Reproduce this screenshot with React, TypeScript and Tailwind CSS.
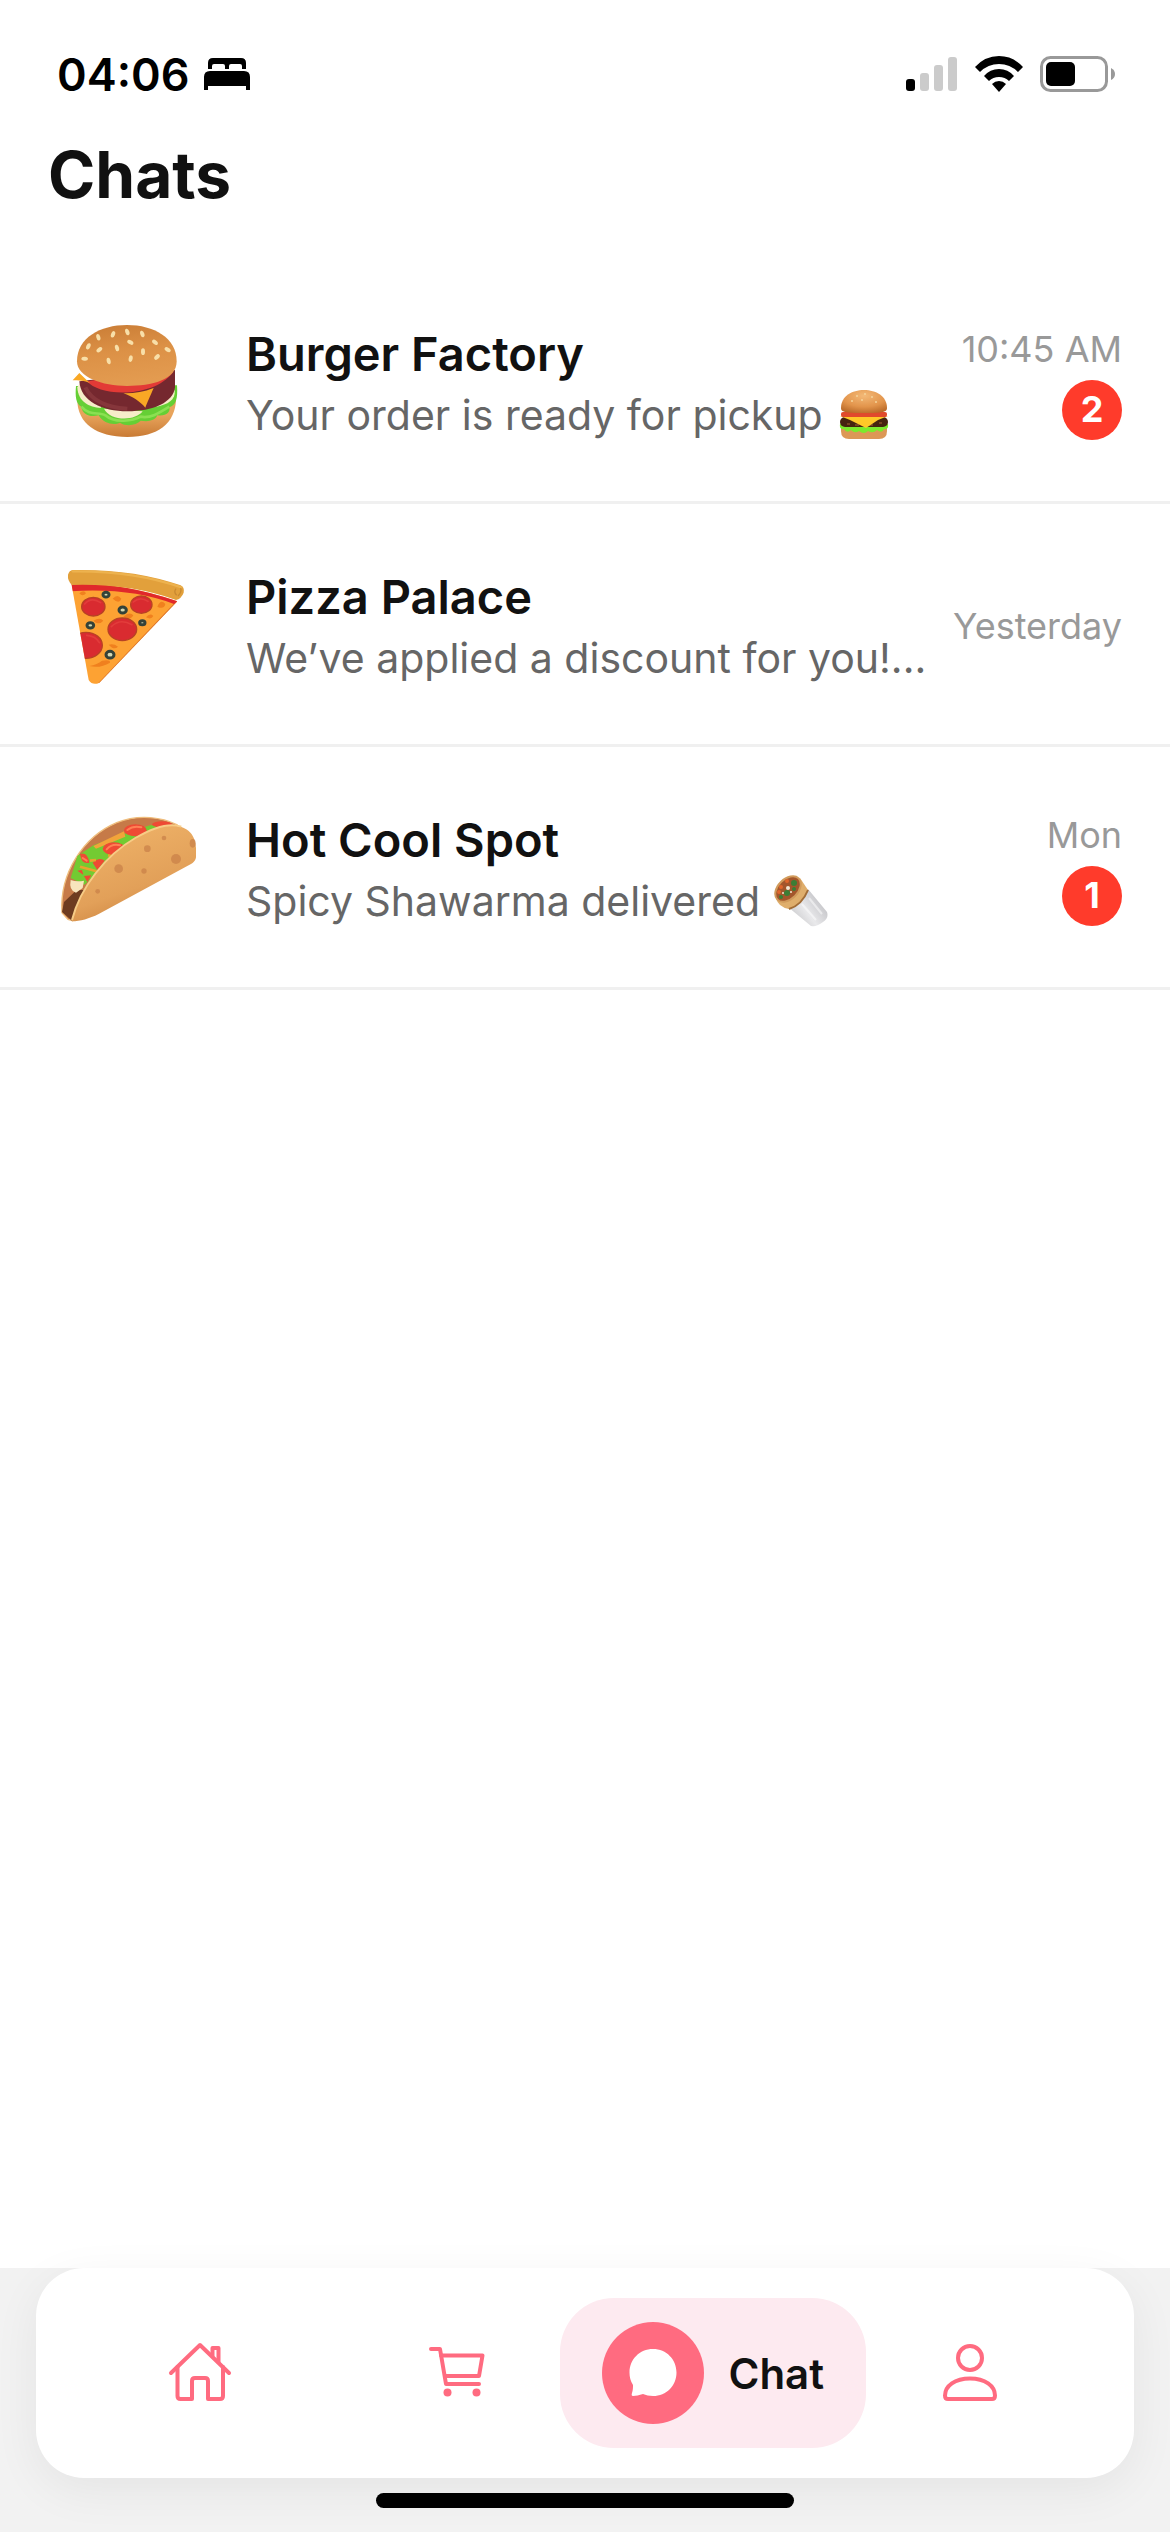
import type { ReactNode } from "react";

function Seeds() {
  const seeds = [
    [262, 96, 20], [219, 103, -20], [175, 112, 15], [307, 102, 20], [145, 139, -25], [178, 149, -50],
    [231, 144, 15], [271, 127, 60], [309, 155, 0], [345, 127, 50], [383, 149, 60], [134, 176, 85],
    [206, 183, 10], [272, 176, -10], [351, 171, -45],
  ];
  return (
    <g fill="#f8dfa8">
      {seeds.map(([x, y, r]) => (
        <ellipse key={`${x}-${y}`} cx={x} cy={y} rx="6" ry="10" transform={`rotate(${-r} ${x} ${y})`} />
      ))}
    </g>
  );
}

function BurgerPicture() {
  return (
    <svg viewBox="24 0 486 486" className="size-full" aria-hidden="true">
      <defs>
        <linearGradient id="bun" x1="0" y1="0" x2="0.2" y2="1">
          <stop offset="0" stopColor="#c97c35" />
          <stop offset="0.5" stopColor="#dc9146" />
          <stop offset="1" stopColor="#e39b50" />
        </linearGradient>
        <linearGradient id="bunBase" x1="0" y1="0" x2="0" y2="1">
          <stop offset="0.4" stopColor="#e8a45c" />
          <stop offset="1" stopColor="#c97b35" />
        </linearGradient>
      </defs>
      <path d="M112 300C112 370 170 411 262 411S405 370 408 300Z" fill="url(#bunBase)" />
      <path d="M108 258C105 290 108 312 124 320C128 345 150 352 176 346C192 374 225 376 240 368C262 382 290 374 302 362C325 366 345 362 352 346C378 350 392 336 388 322C408 316 414 296 411 256Z" fill="#65cf35" />
      <path d="M124 320C150 350 176 334 196 346C225 372 280 362 302 350C330 356 356 340 388 320" fill="none" stroke="#8be052" strokeWidth="8" />
      <path d="M112 262C114 306 148 322 182 324L190 300L120 250Z" fill="#f7edc9" />
      <path d="M404 270C408 300 382 314 350 320L342 300Z" fill="#f7edc9" />
      <path d="M192 326C210 364 286 364 308 334Z" fill="#f7edc9" />
      <path d="M118 244C122 304 186 334 262 334S400 308 405 262V210Z" fill="#75282f" />
      <path d="M136 262C156 304 200 322 262 326" fill="none" stroke="#86363b" strokeWidth="12" />
      <path d="M142 244C176 290 340 296 400 216L384 206Z" fill="#e33a36" />
      <path d="M98 241L118 219L150 250C132 240 116 243 98 241Z" fill="#f9a825" />
      <path d="M250 280C280 281 310 276 341 264C330 290 322 306 316 323C300 304 278 290 250 280Z" fill="#f9a825" />
      <path d="M111 184C111 114 180 75 261 75S410 114 410 184C410 240 335 258 261 258S111 232 111 184Z" fill="url(#bun)" />
      <Seeds />
    </svg>
  );
}

function PizzaPicture() {
  const olives = [
    [198, 164, 9], [248, 210, 11], [307, 248, 8], [151, 256, 10], [210, 344, 12],
  ];
  return (
    <svg viewBox="24 9 486 486" className="size-full" aria-hidden="true">
      <defs>
        <clipPath id="slice">
          <path d="M94 130L146 420Q158 438 178 428L412 184Q250 128 94 130Z" />
        </clipPath>
      </defs>
      <g clipPath="url(#slice)">
        <rect x="80" y="100" width="360" height="350" fill="#fda233" />
        <path d="M178 432L412 186" stroke="#d96e2b" strokeWidth="8" />
        <g fill="#f0801e">
          <path d="M218 176q14-16 26 0q-6 18-26 0ZM160 242q20-12 30 0q-14 16-30 0ZM250 230q18-16 30-4q-10 18-30 4ZM352 200q10-24 24-8q-4 18-24 8ZM206 314q16-4 28 6q-12 12-28-6ZM148 378q24-4 38-16q26-4 24 6q-30 18-62 10ZM118 160q14-12 20 0q-10 12-20 0ZM318 232q12-14 22-4q-6 12-22 4Z" />
        </g>
        <g fill="#d92b30" stroke="#b84224" strokeWidth="4">
          <ellipse cx="160" cy="200" rx="35" ry="28" />
          <ellipse cx="304" cy="194" rx="32" ry="26" />
          <ellipse cx="247" cy="268" rx="43" ry="34" />
          <ellipse cx="138" cy="316" rx="49" ry="39" />
        </g>
        <g fill="none" stroke="#e23c3b" strokeWidth="5" strokeLinecap="round">
          <path d="M134 192Q154 170 182 188M280 186Q300 168 324 184M214 260Q240 234 276 254M140 286Q168 288 178 308" />
        </g>
        <path d="M90 130Q270 130 416 180L402 192Q270 142 90 154Z" fill="#e0282b" />
      </g>
      {olives.map(([x, y, r]) => (
        <ellipse key={`${x}-${y}`} cx={x} cy={y} rx={r} ry={r - 2} fill="#d5d8b1" stroke="#344239" strokeWidth="9" />
      ))}
      <path d="M98 90Q280 86 422 136Q434 142 431 158Q424 176 408 180Q270 130 96 135Q82 122 84 104Q88 91 98 90Z" fill="#e2a03b" />
      <path d="M98 94Q280 92 424 142" fill="none" stroke="#edb24e" strokeWidth="7" strokeLinecap="round" />
      <path d="M408 146q-8 10 2 20M422 144q4 12-8 24" fill="none" stroke="#c98a31" strokeWidth="4" />
    </svg>
  );
}

function TacoPicture() {
  return (
    <svg viewBox="24 -12 486 486" className="size-full" aria-hidden="true">
      <defs>
        <linearGradient id="shell" x1="0.3" y1="0.1" x2="0.7" y2="1">
          <stop offset="0" stopColor="#edb066" />
          <stop offset="0.6" stopColor="#e2a059" />
          <stop offset="1" stopColor="#c9803c" />
        </linearGradient>
      </defs>
      <path d="M66 368C58 250 130 140 230 98C300 70 370 84 410 104L250 180L98 392L84 388Z" fill="#c67a48" stroke="#efbd7c" strokeWidth="4" />
      <path d="M66 366L72 336L110 300L136 300L96 392Z" fill="#6e3c20" />
      <path d="M92 264L112 198L160 166L250 132L330 106L390 104L240 180L134 284Z" fill="#73cb32" />
      <path d="M92 270Q110 276 132 272L128 294L108 308Q86 302 92 270Z" fill="#f8e5bd" />
      <path d="M160 168L252 124L256 140L168 176Z" fill="#f2a43a" />
      <g fill="#ee4a34">
        <ellipse cx="286" cy="121" rx="34" ry="18" />
        <ellipse cx="222" cy="176" rx="34" ry="19" />
        <ellipse cx="366" cy="103" rx="30" ry="9" />
        <path d="M120 192Q142 184 148 218Q124 224 120 192ZM158 218Q178 200 194 212L172 240ZM132 258L154 256L142 276ZM112 242L126 240L130 254Z" />
      </g>
      <g fill="none" stroke="#ff8054" strokeWidth="6" strokeLinecap="round">
        <path d="M262 120Q280 106 304 112M200 178Q216 160 240 166M128 204L140 212" />
      </g>
      <path d="M120 230L170 244M204 196L224 202M150 212L168 210" stroke="#e7a52c" strokeWidth="8" />
      <path d="M96 394C120 294 196 196 286 144C370 92 464 90 468 174V202C466 214 458 220 446 226L176 372C148 386 120 394 96 394Z" fill="url(#shell)" />
      <path d="M96 390C120 294 196 196 286 144C340 112 390 98 424 110" fill="none" stroke="#f7cc86" strokeWidth="6" />
      <g fill="#c98048" opacity="0.7">
        <circle cx="236" cy="236" r="13" />
        <circle cx="322" cy="176" r="10" />
        <circle cx="408" cy="207" r="15" />
        <circle cx="312" cy="243" r="8" />
        <circle cx="372" cy="144" r="7" />
        <circle cx="173" cy="304" r="7" />
        <ellipse cx="458" cy="160" rx="9" ry="13" />
      </g>
    </svg>
  );
}

function BurgerEmoji() {
  return (
    <svg viewBox="0 0 54 54" className="ml-3.5 inline-block size-[54px] shrink-0 align-middle" role="img" aria-label="Burger">
      <defs>
        <radialGradient id="emojiBun" cx="0.5" cy="0.25" r="0.8">
          <stop offset="0" stopColor="#f3b977" />
          <stop offset="0.6" stopColor="#e2944b" />
          <stop offset="1" stopColor="#b86827" />
        </radialGradient>
      </defs>
      <path d="M4 39H50V43Q50 51 42 51H12Q4 51 4 43Z" fill="#dc9856" />
      <path d="M3 36Q2 42 7 41Q10 46 14 42Q18 46 22 43Q27 47 31 43Q36 46 40 42Q45 46 47 41Q52 42 51 36Z" fill="#7bea2c" />
      <rect x="3" y="29" width="48" height="10" rx="5" fill="#45240f" />
      <path d="M10 36h3M18 37h4M32 37h4M42 35h3" stroke="#754420" strokeWidth="2" />
      <path d="M3 28H51L41 32L29 40L13 32Z" fill="#ffc928" />
      <rect x="4" y="24" width="46" height="5" rx="2" fill="#e04a2c" />
      <path d="M4 20C4 8 15 2 27 2S50 8 50 20C50 24 46 25 27 25S4 24 4 20Z" fill="url(#emojiBun)" />
      <g fill="#f5d39a">
        <circle cx="20" cy="8" r="1" /><circle cx="28" cy="6" r="1" /><circle cx="35" cy="9" r="1" />
        <circle cx="15" cy="13" r="1" /><circle cx="25" cy="12" r="1" /><circle cx="39" cy="14" r="1" />
      </g>
    </svg>
  );
}

function WrapEmoji() {
  return (
    <svg viewBox="0 0 54 54" className="ml-3.5 inline-block size-[54px] shrink-0 align-middle" role="img" aria-label="Wrap">
      <defs>
        <linearGradient id="foil" x1="0" y1="1" x2="1" y2="0.3">
          <stop offset="0" stopColor="#b9b9bb" />
          <stop offset="0.5" stopColor="#e9e9eb" />
          <stop offset="1" stopColor="#bcbcc0" />
        </linearGradient>
      </defs>
      <path d="M14 33L34 15L53 38Q55 44 49 48Q43 53 37 52Z" fill="url(#foil)" />
      <path d="M2 24Q4 33 15 35Q26 32 34 16L26 4Z" fill="#dfae6c" />
      <path d="M15 35Q28 31 34 16" fill="none" stroke="#a26d37" strokeWidth="2" />
      <ellipse cx="14" cy="15" rx="10" ry="15" transform="rotate(45 14 15)" fill="#a3562c" stroke="#d19b5c" strokeWidth="2" />
      <g fill="#3c7d35">
        <circle cx="20" cy="9" r="3" /><circle cx="13" cy="19" r="3" /><circle cx="7" cy="23" r="2" /><circle cx="20" cy="15" r="2" />
      </g>
      <g fill="#f2e8d5">
        <circle cx="14" cy="14" r="2" /><circle cx="9" cy="19" r="1" /><circle cx="17" cy="18" r="1" />
      </g>
      <g fill="#e0662c">
        <circle cx="13" cy="7" r="2" /><circle cx="7" cy="13" r="2" /><circle cx="5" cy="18" r="2" />
      </g>
      <path d="M28 30L42 46M35 24L48 40" stroke="#fff" strokeWidth="2" opacity="0.5" />
    </svg>
  );
}

function BedIcon() {
  return (
    <svg viewBox="0 0 48 34" className="h-[34px] w-12" aria-label="Sleep focus">
      <path d="M5 12V6Q5 1 10 1H38Q43 1 43 6V12H39V9Q39 7 37 7H28Q26 7 26 9V12H22V9Q22 7 20 7H11Q9 7 9 9V12Z" />
      <path d="M1 33V20Q1 14 7 14H41Q47 14 47 20V33H43V29H5V33Z" />
    </svg>
  );
}

function StatusBar() {
  return (
    <div className="flex h-[132px] items-center justify-between pt-4 pr-[54px] pl-[57px]">
      <div className="flex items-center gap-3.5">
        <span className="text-[45px] leading-[57px] font-semibold text-black">04:06</span>
        <BedIcon />
      </div>
      <div className="flex items-center gap-4">
        <svg viewBox="0 0 52 36" className="h-9 w-[52px]" aria-label="Signal">
          <rect x="0" y="23" width="9" height="12" rx="3" />
          <g fill="#cbcbcb">
            <rect x="14" y="17" width="9" height="18" rx="3" />
            <rect x="28" y="9" width="9" height="26" rx="3" />
            <rect x="42" y="1" width="9" height="34" rx="3" />
          </g>
        </svg>
        <svg viewBox="0 0 50 36" className="h-9 w-[50px]" aria-label="Wi-Fi">
          <path d="M1 11Q11 0 25 0T49 11L44 16Q36 8 25 8T6 16Z" />
          <path d="M10 20Q16 13 25 13T40 20L35 25Q31 21 25 21T15 25Z" />
          <path d="M18 28Q21 25 25 25T32 28L25 36Z" />
        </svg>
        <svg viewBox="0 0 76 36" className="h-9 w-[76px]" aria-label="Battery">
          <rect x="1.5" y="1.5" width="65" height="33" rx="9" fill="none" stroke="#999" strokeWidth="3" />
          <rect x="6" y="6" width="29" height="24" rx="5" />
          <path d="M71 12Q75 14 75 18T71 24Z" fill="#999" />
        </svg>
      </div>
    </div>
  );
}

type Chat = {
  name: string;
  message: string;
  emoji?: ReactNode;
  picture: ReactNode;
  time: string;
  unread?: number;
};

const chats: Chat[] = [
  {
    name: "Burger Factory",
    message: "Your order is ready for pickup",
    emoji: <BurgerEmoji />,
    picture: <BurgerPicture />,
    time: "10:45 AM",
    unread: 2,
  },
  {
    name: "Pizza Palace",
    message: "We’ve applied a discount for you!...",
    picture: <PizzaPicture />,
    time: "Yesterday",
  },
  {
    name: "Hot Cool Spot",
    message: "Spicy Shawarma delivered",
    emoji: <WrapEmoji />,
    picture: <TacoPicture />,
    time: "Mon",
    unread: 1,
  },
];

function ChatRow({ chat }: { chat: Chat }) {
  return (
    <li className="border-b-[3px] border-[#f0f0f0]">
      <button type="button" className="flex w-full items-center px-12 py-[39px] text-left">
        <span className="mr-9 size-[162px] shrink-0">{chat.picture}</span>
        <span className="flex min-w-0 flex-1 flex-col gap-1.5 pt-1">
          <span className="text-[47px] leading-[57px] font-semibold text-[#111]">{chat.name}</span>
          <span className="flex h-[54px] items-center truncate text-[41px] leading-[54px] text-[#666]">
            {chat.message}
            {chat.emoji}
          </span>
        </span>
        <span className="flex shrink-0 flex-col items-end gap-2 pt-1 pl-4">
          <span className="text-[36px] leading-[45px] text-[#999]">{chat.time}</span>
          {chat.unread && (
            <span className="flex size-[60px] items-center justify-center rounded-full bg-[#ff3b2b] text-[36px] leading-[45px] font-bold text-white">
              {chat.unread}
            </span>
          )}
        </span>
      </button>
    </li>
  );
}

function HomeIcon() {
  return (
    <svg viewBox="0 0 66 66" className="size-[66px]" fill="none" stroke="currentColor" strokeWidth="4" strokeLinecap="round" strokeLinejoin="round" aria-hidden="true">
      <path d="M4 33L33 5L62 33" />
      <path d="M10.500 27V56Q10.500 59 13.500 59H25V41Q25 38 28 38H38Q41 38 41 41V59H53Q56 59 56 56V27" />
      <path d="M45.500 16V8H51.500V22" />
    </svg>
  );
}

function CartIcon() {
  return (
    <svg viewBox="0 0 66 66" className="size-[66px]" fill="none" stroke="currentColor" strokeWidth="4" strokeLinecap="round" strokeLinejoin="round" aria-hidden="true">
      <path d="M7 9H16L22 44H55" />
      <path d="M17 15.500H58.500L55 36H21" />
      <g fill="currentColor" stroke="none">
        <circle cx="23.500" cy="52.500" r="4" />
        <circle cx="52.500" cy="52.500" r="4" />
      </g>
    </svg>
  );
}

function PersonIcon() {
  return (
    <svg viewBox="0 0 66 66" className="size-[66px]" fill="none" stroke="currentColor" strokeWidth="4" strokeLinecap="round" strokeLinejoin="round" aria-hidden="true">
      <circle cx="33" cy="18" r="12" />
      <path d="M8 55.500C8 46 18 38.500 33 38.500S58 46 58 55.500Q58 59 55 59H11Q8 59 8 55.500Z" />
    </svg>
  );
}

function ChatBubble() {
  return (
    <svg viewBox="0 0 102 102" className="size-[102px] rounded-full bg-[#ff6b80]" fill="#fff" aria-hidden="true">
      <path d="M51 27C64.500 27 74.500 37.500 74.500 50.500S64.500 74 51 74C47 74 44 73 41 72C37 73 34 74 31 74Q29 74 30 71C31 68 31 65 31 63C28.500 59 27.500 55 27.500 50.500C27.500 37.500 37.500 27 51 27Z" />
    </svg>
  );
}

function TabBar() {
  return (
    <footer className="bg-[#f2f2f2] px-9 pb-6">
      <nav className="grid h-[210px] grid-cols-4 items-center rounded-[48px] bg-white px-9 text-[#ff6b80] shadow-[0_12px_48px_rgba(0,0,0,0.06)]" aria-label="Main">
        <a href="#home" aria-label="Home" className="flex justify-center"><HomeIcon /></a>
        <a href="#cart" aria-label="Cart" className="flex justify-center"><CartIcon /></a>
        <div className="flex justify-center">
          <a href="#chat" aria-current="page" className="flex shrink-0 items-center gap-6 rounded-[54px] bg-[#fdeaf0] px-[42px] py-6">
            <ChatBubble />
            <span className="text-[42px] leading-[51px] font-semibold text-[#111]">Chat</span>
          </a>
        </div>
        <a href="#profile" aria-label="Profile" className="flex justify-center"><PersonIcon /></a>
      </nav>
      <div className="mx-auto mt-[15px] h-[15px] w-[38%] rounded-full bg-black" />
    </footer>
  );
}

export default function App() {
  return (
    <div className="flex min-h-screen flex-col bg-white font-['Inter',sans-serif]">
      <StatusBar />
      <header className="px-12 pt-0.5 pb-[46px]">
        <h1 className="text-[64px] leading-[81px] font-bold text-[#111]">Chats</h1>
      </header>
      <main className="flex-1">
        <ul>
          {chats.map((chat) => (
            <ChatRow key={chat.name} chat={chat} />
          ))}
        </ul>
      </main>
      <TabBar />
    </div>
  );
}
